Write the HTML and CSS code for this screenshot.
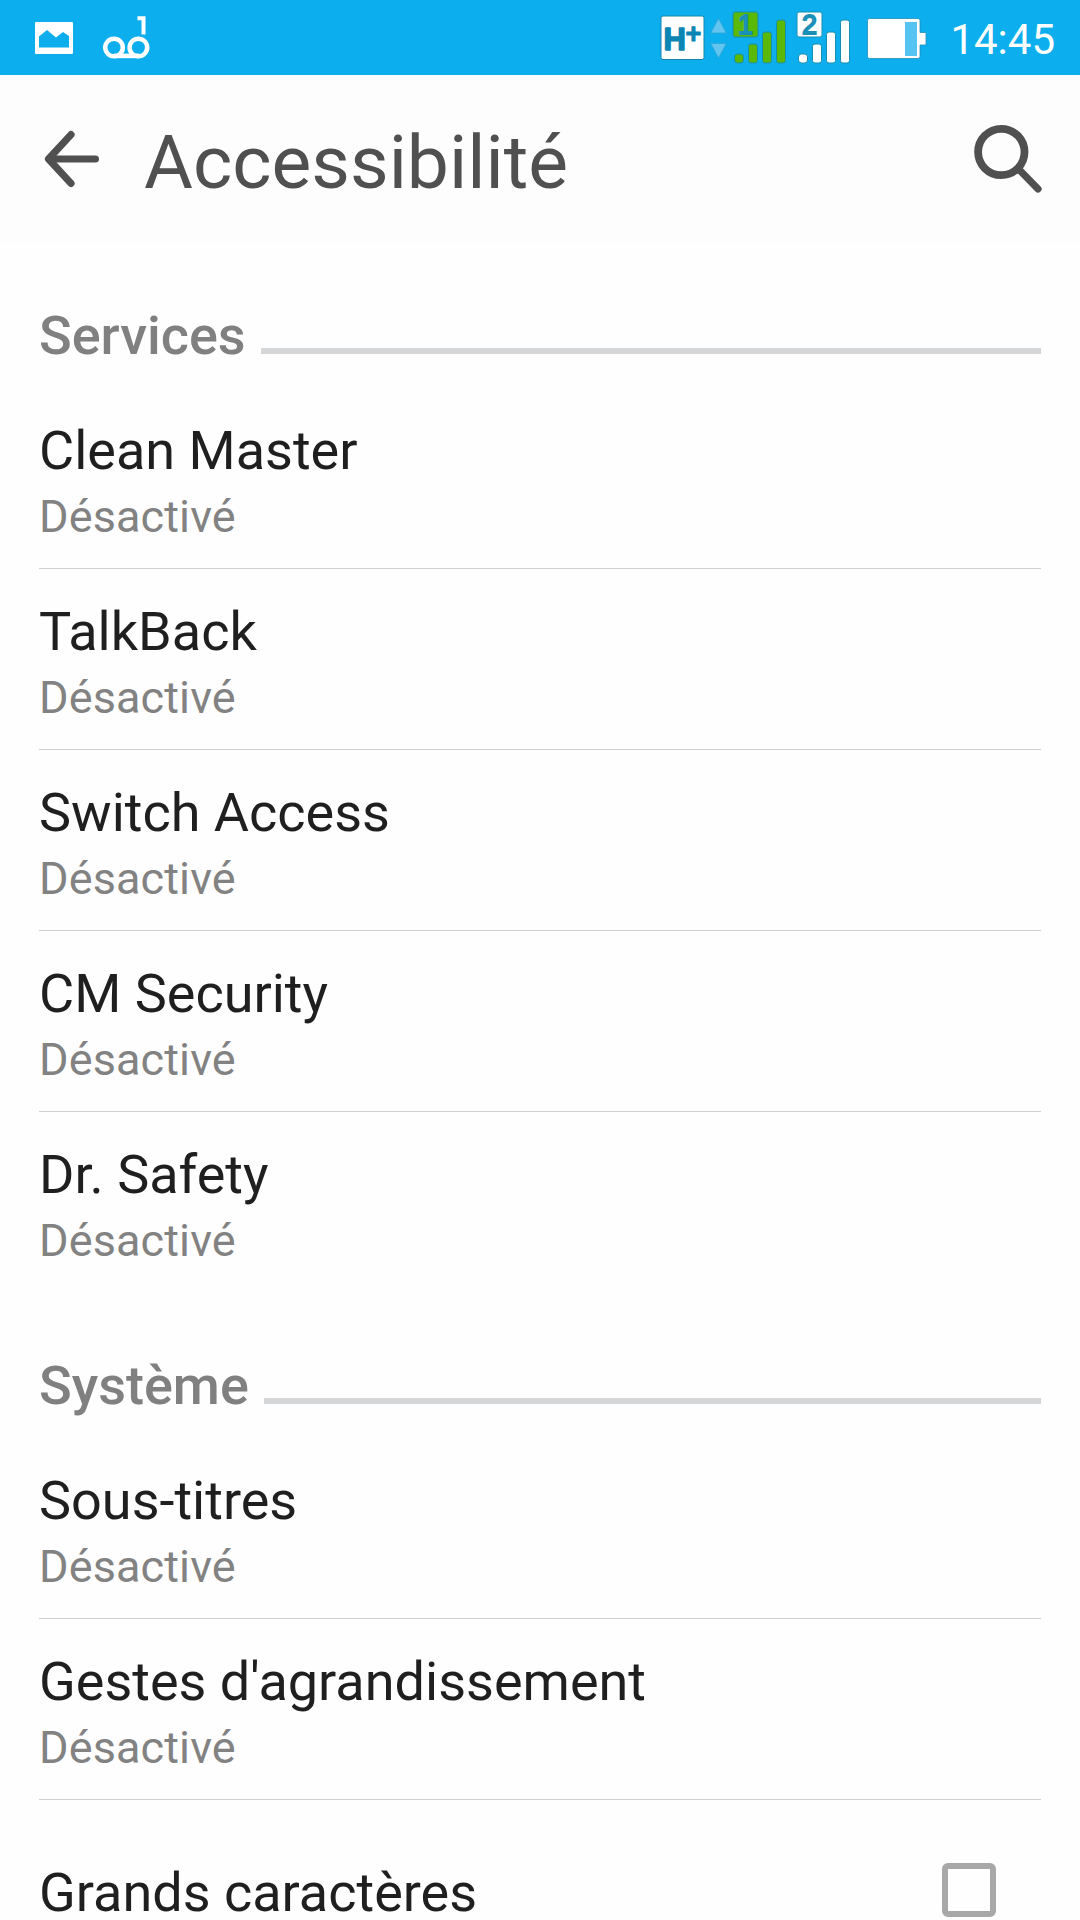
FILE: index.html
```html
<!DOCTYPE html>
<html lang="fr">
<head>
<meta charset="utf-8">
<title>Accessibilité</title>
<link rel="stylesheet" href="styles.css">
</head>
<body>
<div class="screen">
  <div class="status-bar">
    <div class="status-left">
      <svg class="picture-icon" width="38" height="32" viewBox="0 0 38 32">
        <path fill="#fff" fill-rule="evenodd" d="M1 0H37Q38 0 38 1V31Q38 32 37 32H1Q0 32 0 31V1Q0 0 1 0ZM4 25.500H34V14L28 10L21 15.500L12 8L4 14.500Z"/>
      </svg>
      <svg width="47" height="43" viewBox="0 0 47 43" fill="none" stroke="#fff">
        <circle cx="11" cy="31.500" r="8.800" stroke-width="4.500"/>
        <circle cx="35.400" cy="31.500" r="8.800" stroke-width="4.500"/>
        <path d="M11 39.900H36" stroke-width="4.600"/>
        <path d="M34.500 2.200H40.500V18.500" stroke-width="4"/>
      </svg>
    </div>
    <div class="status-right">
      <svg width="46" height="48" viewBox="0 0 46 48">
        <rect x="1" y="1" width="43" height="43.500" rx="2" fill="#fff" stroke="#1585b0"/>
        <text class="network" x="3.500" y="34.500">H</text>
        <text class="network-plus" x="25.500" y="28">+</text>
      </svg>
      <svg class="data-arrows" width="17" height="42" viewBox="0 0 17 42" fill="#62c5ef" stroke="#2aa4d6" stroke-width=".7">
        <path d="M8.500 .5L16.300 15H.7ZM.7 25.500H16.300L8.500 40Z"/>
      </svg>
      <svg class="signal" width="55" height="54" viewBox="0 0 55 54" fill="#5ab806" stroke="#148eb0">
        <rect x="1" y="1" width="25" height="25" rx="2"/>
        <rect x="2.500" y="43" width="9" height="9" rx="3"/>
        <rect x="16.500" y="33" width="9" height="19" rx="2.500"/>
        <rect x="30.500" y="21" width="9" height="31" rx="2.500"/>
        <rect x="44.500" y="9" width="9" height="43" rx="2.500"/>
        <text class="sim" x="13.500" y="23">1</text>
      </svg>
      <svg class="signal-two" width="55" height="54" viewBox="0 0 55 54" fill="#fff" stroke="#148eb0">
        <rect x="1" y="1" width="25" height="25" rx="2"/>
        <rect x="2.500" y="43" width="9" height="9" rx="3"/>
        <rect x="16.500" y="33" width="9" height="19" rx="2.500"/>
        <rect x="30.500" y="21" width="9" height="31" rx="2.500"/>
        <rect x="44.500" y="9" width="9" height="43" rx="2.500"/>
        <text class="sim" x="13.500" y="23">2</text>
      </svg>
      <svg class="battery" width="60" height="42" viewBox="0 0 60 42">
        <path d="M2.500 .5H51Q53 .5 53 2.500V14.500H59V27H53V38.500Q53 40.500 51 40.500H2.500Q.5 40.500 .5 38.500V2.500Q.5 .5 2.500 .5Z" fill="#fff" stroke="#208eb8" stroke-width=".8"/>
        <rect x="38" y="4" width="12" height="34" fill="#55c4f2"/>
      </svg>
      <span class="clock">14:45</span>
    </div>
  </div>

  <header class="toolbar">
    <svg width="58" height="58" viewBox="0 0 58 58" fill="none" stroke="#505050" stroke-width="7.200" stroke-linecap="round" stroke-linejoin="round">
      <path d="M29 4.600L6.500 29L29 53.400"/>
      <path d="M8 29H53.400"/>
    </svg>
    <h1 class="title">Accessibilité</h1>
    <svg width="70" height="70" viewBox="0 0 70 70" fill="none" stroke="#505050">
      <circle cx="28.300" cy="28" r="23.200" stroke-width="7.800"/>
      <path d="M45.500 45L65 65" stroke-width="7.200" stroke-linecap="round"/>
    </svg>
  </header>

  <main class="settings">
    <section>
      <h2 class="section-title">Services</h2>
      <div class="row"><div class="name">Clean Master</div><div class="state">Désactivé</div></div>
      <div class="row"><div class="name">TalkBack</div><div class="state">Désactivé</div></div>
      <div class="row"><div class="name">Switch Access</div><div class="state">Désactivé</div></div>
      <div class="row"><div class="name">CM Security</div><div class="state">Désactivé</div></div>
      <div class="row row-last"><div class="name">Dr. Safety</div><div class="state">Désactivé</div></div>
    </section>
    <section>
      <h2 class="section-title">Système</h2>
      <div class="row"><div class="name">Sous-titres</div><div class="state">Désactivé</div></div>
      <div class="row"><div class="name">Gestes d'agrandissement</div><div class="state">Désactivé</div></div>
      <label class="toggle-row"><span class="name">Grands caractères</span><input class="checkbox" type="checkbox"></label>
    </section>
  </main>
</div>
</body>
</html>
```
FILE: styles.css
```css
* {
  box-sizing: border-box;
}

body {
  margin: 0;
  background: #fefefe;
  font-family: Roboto, "Noto Sans", sans-serif;
}

svg {
  display: block;
  flex: none;
}

.screen {
  width: 1080px;
  height: 1920px;
  overflow: hidden;
}

.status-bar {
  display: flex;
  justify-content: space-between;
  height: 75px;
  padding: 0 25px 0 35px;
  background: #0daeed;
}

.status-left,
.status-right {
  display: flex;
  align-items: flex-start;
}

.status-left {
  gap: 30px;
  padding-top: 16px;
}

.picture-icon {
  margin-top: 6px;
}

.status-right {
  padding-top: 11px;
}

.status-right svg:first-child {
  margin-top: 4px;
}

.network,
.network-plus {
  font: 700 31px "Liberation Sans", sans-serif;
  fill: #0b86b4;
  stroke: #0b86b4;
  stroke-linejoin: round;
}

.network {
  stroke-width: 1.5px;
}

.network-plus {
  font-size: 27px;
}

.data-arrows {
  margin: 7px 0 0 4px;
}

.signal {
  margin-left: 5px;
}

.signal-two {
  margin-left: 9px;
}

.sim {
  font: 27px "Liberation Sans", sans-serif;
  text-anchor: middle;
  fill: #209fcd;
  stroke: #1a8fb5;
  stroke-width: 1.8px;
}

.battery {
  margin: 7px 0 0 16px;
}

.clock {
  width: 105px;
  margin-left: 23px;
  padding-top: 4px;
  color: #fff;
  font-size: 42px;
  line-height: 49px;
  text-align: right;
  white-space: nowrap;
}

.toolbar {
  display: flex;
  align-items: center;
  height: 168px;
  padding: 0 37px 0 42px;
  background: #fdfdfd;
}

.title {
  flex: 1;
  margin: 5px 0 0 44px;
  color: #505050;
  font-size: 75px;
  font-weight: 400;
  line-height: 88px;
}

.settings {
  padding: 0 39px;
}

.section-title {
  display: flex;
  align-items: flex-start;
  gap: 15px;
  margin: 0;
  padding: 61px 0 21px;
  color: #808080;
  font-size: 54px;
  font-weight: 500;
  line-height: 63px;
}

.section-title::after {
  content: "";
  flex: 1;
  height: 6px;
  margin-top: 44px;
  background: #d5d6d8;
}

.row {
  height: 181px;
  padding-top: 31px;
  border-bottom: 1px solid #d0d0d0;
}

.row-last {
  border-color: transparent;
}

.name {
  color: #1f1f1f;
  font-size: 54px;
  line-height: 63px;
}

.state {
  margin-top: 8px;
  color: #828282;
  font-size: 45px;
  line-height: 53px;
  letter-spacing: .12px;
}

.toggle-row {
  display: flex;
  justify-content: space-between;
  align-items: flex-start;
  padding: 61px 45px 0 0;
}

.checkbox {
  appearance: none;
  width: 54px;
  height: 54px;
  margin: 2px 0 0;
  border: 6px solid #a8a8a8;
  border-radius: 6px;
}
```
